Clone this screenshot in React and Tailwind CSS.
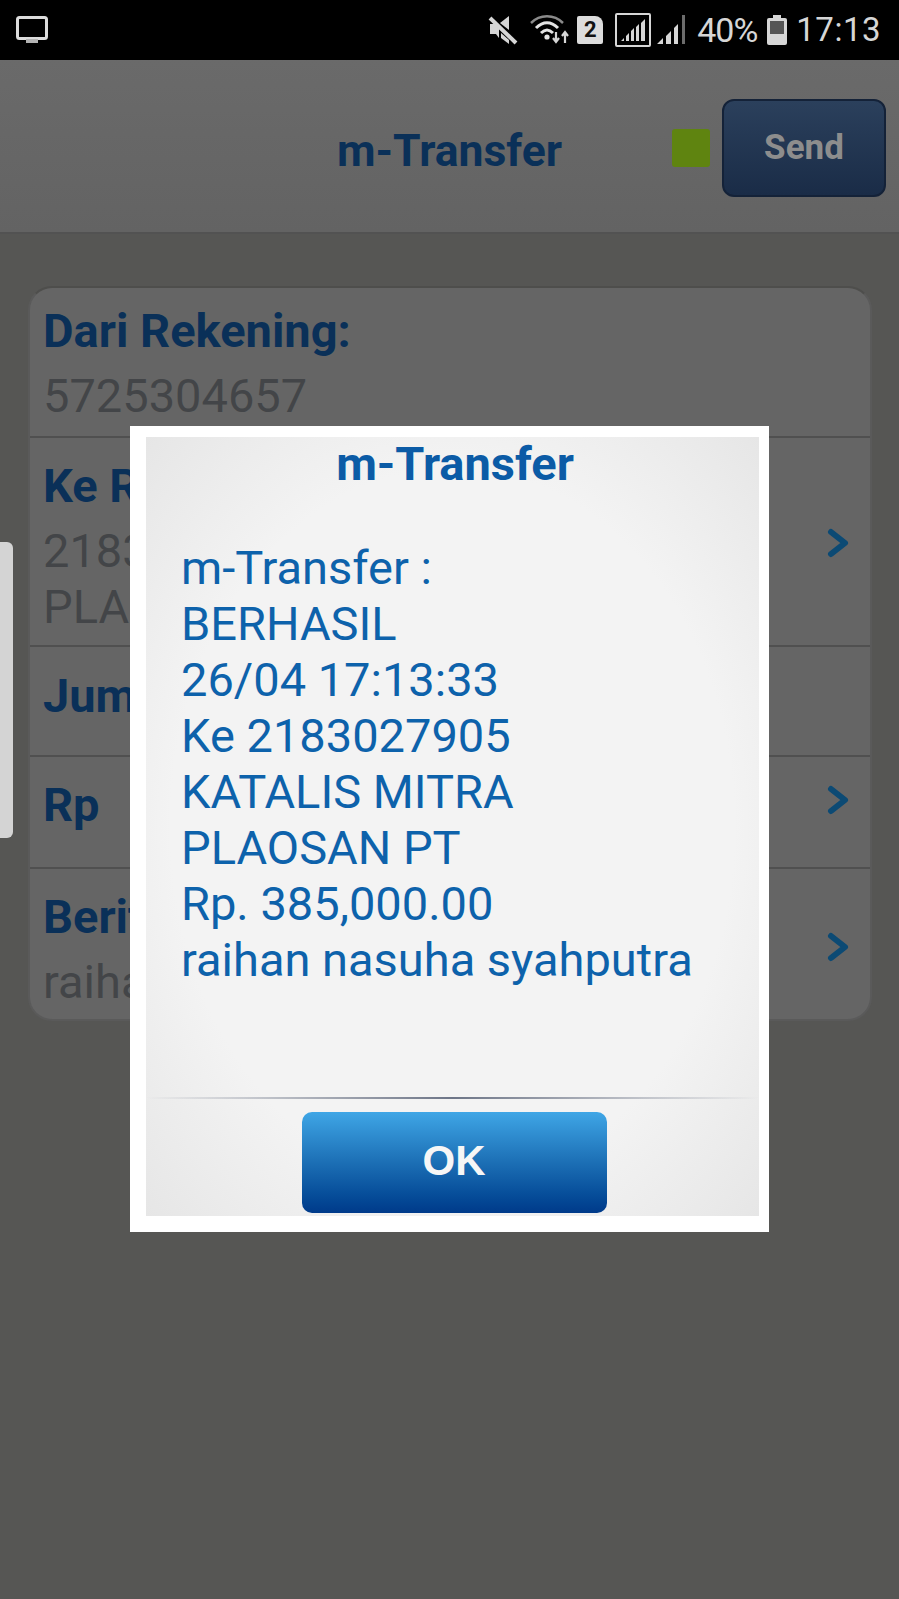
import React from "react";

const Chevron = ({ className }) => (
  <svg viewBox="0 0 22 30" width="22" height="30" fill="none" stroke="#0c4a74" strokeWidth="6" strokeLinecap="round" strokeLinejoin="round" className={className}>
    <polyline points="4,4 18,15 4,26" />
  </svg>
);

const MuteIcon = () => (
  <svg viewBox="0 0 30 32" width="30" height="32" fill="#d6d6d6" className="mr-[12px]">
    <path d="M2 10h6l3 4v10l-3-4H2z" />
    <path d="M12 9l9-7v14z" />
    <path d="M13 19l8 7v4l-8-6z" />
    <line x1="2" y1="4" x2="28" y2="29" stroke="#d6d6d6" strokeWidth="4" />
  </svg>
);

const WifiIcon = () => (
  <svg viewBox="0 0 40 32" width="40" height="32" fill="none" className="mr-[7px]">
    <path d="M1 9C10 0 24 0 33 9" stroke="#8a8a8a" strokeWidth="2.5" />
    <path d="M6 14C13 7 21 7 28 14" stroke="#e4e4e4" strokeWidth="3" />
    <path d="M11 19C15 15 19 15 23 19" stroke="#e4e4e4" strokeWidth="3" />
    <circle cx="17" cy="23" r="2.6" fill="#e4e4e4" />
    <path d="M26 18v9M23 24l3 4 3-4" stroke="#d6d6d6" strokeWidth="2.2" />
    <path d="M35 29v-10M32 22l3-4 3 4" stroke="#d6d6d6" strokeWidth="2.2" />
  </svg>
);

const SimIcon = () => (
  <div className="mr-[12px] flex h-[28px] w-[26px] items-center justify-center rounded-[2px] rounded-tr-[8px] bg-[#dcdcdc] font-['Roboto',sans-serif] text-[22px] leading-none font-bold text-[#111]">
    2
  </div>
);

const BoxSignal = () => (
  <svg viewBox="0 0 36 34" width="36" height="34" fill="#d6d6d6" className="mr-[5px]">
    <rect x="1" y="1" width="34" height="32" rx="1" fill="none" stroke="#d6d6d6" strokeWidth="2" />
    <path d="M6 28h3v-3zM11 28h3v-8l-3 3zM16 28h3V15l-3 3zM21 28h3V11l-3 3zM26 28h4V6l-4 4z" />
  </svg>
);

const Signal = () => (
  <svg viewBox="0 0 30 30" width="30" height="30" fill="#d6d6d6" className="mr-[11px]">
    <path d="M1 29h6v-6zM10 29h5V16l-5 5zM18 29h4V9l-4 4z" />
    <rect x="26" y="0" width="3" height="29" fill="#6c6c6c" />
  </svg>
);

const BatteryIcon = () => (
  <svg viewBox="0 0 20 30" width="20" height="30" className="mr-[9px]">
    <rect x="6" y="0" width="8" height="3" fill="#d6d6d6" />
    <rect x="0" y="3" width="20" height="27" rx="2" fill="#d6d6d6" />
    <rect x="3" y="6" width="14" height="13" fill="#555" />
  </svg>
);

const MonitorIcon = () => (
  <svg viewBox="0 0 32 28" width="32" height="28" fill="none">
    <rect x="1.5" y="1.5" width="29" height="21" rx="2" stroke="#dcdcdc" strokeWidth="3" />
    <rect x="10" y="23" width="12" height="4" fill="#b4b4b4" />
  </svg>
);

const Row = ({ label, lines, height, chevron, last }) => (
  <div className={`flex items-start pl-[13px] pr-[21px] ${height} ${last ? "" : "border-b-2 border-[#505050]"}`}>
    <div className="min-w-0 flex-1">
      <div className="text-[47px] leading-[52px] font-bold text-[#0a3058]">{label}</div>
      <div className="mt-[11px]">
        {lines.map((line) => (
          <div key={line} className="text-[47px] leading-[56px] whitespace-nowrap text-[#434548]">
            {line}
          </div>
        ))}
      </div>
    </div>
    {chevron}
  </div>
);

export default function App() {
  const lines = [
    "m-Transfer :",
    "BERHASIL",
    "26/04 17:13:33",
    "Ke 2183027905",
    "KATALIS MITRA",
    "PLAOSAN PT",
    "Rp. 385,000.00",
    "raihan nasuha syahputra",
  ];

  return (
    <div className="relative flex h-[1599px] w-[899px] flex-col overflow-hidden bg-[#565654] font-['Roboto',sans-serif]">
      {/* Status bar */}
      <div className="flex h-[60px] shrink-0 items-center bg-black pl-[16px] pr-[18px]">
        <MonitorIcon />
        <div className="flex-1" />
        <MuteIcon />
        <WifiIcon />
        <SimIcon />
        <BoxSignal />
        <Signal />
        <span className="mr-[10px] text-[34px] tracking-[-1px] text-[#d6d6d6]">40%</span>
        <BatteryIcon />
        <span className="text-[33px] tracking-[0.5px] text-[#d6d6d6]">17:13</span>
      </div>

      {/* Header */}
      <div className="relative flex h-[174px] shrink-0 items-center justify-end border-b-2 border-[#525252] bg-gradient-to-b from-[#6a6a6a] to-[#636363] pr-[13px] pt-[4px]">
        <div className="absolute left-[337px] top-[66px] text-[44.5px] leading-[50px] font-bold text-[#0a3058]">m-Transfer</div>
        <div className="mr-[12px] h-[38px] w-[38px] rounded-[3px] bg-[#5f8410]" />
        <div className="flex h-[98px] w-[164px] items-center justify-center rounded-[12px] border-2 border-[#142238] bg-gradient-to-b from-[#2b405c] to-[#1a2c47] text-[35px] font-bold text-[#8d8d8d]">
          Send
        </div>
      </div>

      {/* Form card */}
      <div className="pl-[28px] pr-[27px] pt-[52px]">
        <div className="overflow-hidden rounded-[24px] border-2 border-[#5a5a5a] border-t-[#4e4e4c] bg-[#656565]">
          <Row label="Dari Rekening:" lines={["5725304657"]} height="h-[150px] pt-[17px]" />
          <Row
            label="Ke Rekening:"
            lines={["2183027905 KATALIS MITRA", "PLAOSAN PT"]}
            height="h-[209px] pt-[22px]"
            chevron={<Chevron className="mt-[68px]" />}
          />
          <Row label="Jumlah:" lines={[]} height="h-[110px] pt-[23px]" />
          <Row label="Rp" lines={[]} height="h-[112px] pt-[22px]" chevron={<Chevron className="mt-[6px]" />} />
          <Row
            label="Berita:"
            lines={["raihan nasuha syahputra"]}
            height="h-[150px] pt-[22px]"
            chevron={<Chevron className="mt-[41px]" />}
            last
          />
        </div>
      </div>

      {/* Scroll handle */}
      <div className="absolute left-0 top-[542px] h-[296px] w-[13px] rounded-r-[6px] bg-[#d4d4d4]" />

      {/* Dialog */}
      <div className="absolute left-[130px] top-[426px] h-[806px] w-[639px] bg-white pb-[16px] pl-[16px] pr-[10px] pt-[11px]">
        <div className="flex h-full flex-col bg-[radial-gradient(ellipse_at_center,#f3f3f3_65%,#e6e6e6_100%)]">
          <div className="pl-[5px] pt-[1px] text-center text-[47px] leading-[52px] font-bold text-[#0b5ba6]">m-Transfer</div>
          <div className="flex-1 pl-[35px] pt-[50px]">
            {lines.map((line) => (
              <div key={line} className="text-[47px] leading-[56px] text-[#0d62ab]">
                {line}
              </div>
            ))}
          </div>
          <div className="h-[2px] bg-gradient-to-r from-transparent via-[#6d7587] to-transparent" />
          <div className="flex justify-center pb-[3px] pl-[3px] pt-[13px]">
            <div className="flex h-[101px] w-[305px] items-center justify-center rounded-[10px] bg-gradient-to-b from-[#3fa6e6] via-[#1c6fb5] to-[#003a8a] pb-[4px] font-['Liberation_Sans',sans-serif] text-[42px] font-bold text-[#f6f6f6]">
              OK
            </div>
          </div>
        </div>
      </div>
    </div>
  );
}
